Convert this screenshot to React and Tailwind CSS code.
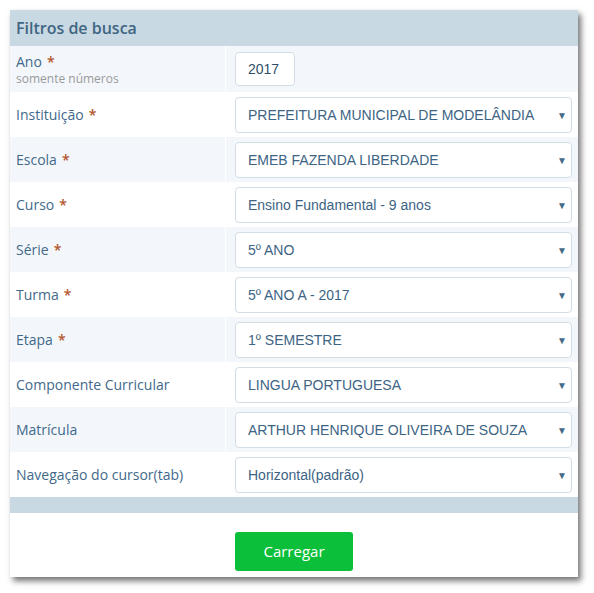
const fields = [
  { label: 'Instituição', required: true, value: 'PREFEITURA MUNICIPAL DE MODELÂNDIA' },
  { label: 'Escola', required: true, value: 'EMEB FAZENDA LIBERDADE' },
  { label: 'Curso', required: true, value: 'Ensino Fundamental - 9 anos' },
  { label: 'Série', required: true, value: '5º ANO' },
  { label: 'Turma', required: true, value: '5º ANO A - 2017' },
  { label: 'Etapa', required: true, value: '1º SEMESTRE' },
  { label: 'Componente Curricular', required: false, value: 'LINGUA PORTUGUESA' },
  { label: 'Matrícula', required: false, value: 'ARTHUR HENRIQUE OLIVEIRA DE SOUZA' },
  { label: 'Navegação do cursor(tab)', required: false, value: 'Horizontal(padrão)' },
];

function Asterisk() {
  return <span className="ml-[5px] text-[#b4552d] font-semibold">*</span>;
}

function FakeSelect({ value }) {
  return (
    <div className="flex h-[36px] w-full items-center justify-between rounded-[4px] border border-[#d3dde6] bg-white pt-px pl-[12px] pr-[4px] font-['Liberation_Sans',Arial,sans-serif] text-[14px] text-[#3d6484]">
      <span>{value}</span>
      <span className="text-[10px] text-[#44698a]">▼</span>
    </div>
  );
}

export default function App() {
  return (
    <div className="min-h-[593px] bg-white pt-[10px] pl-[10px] font-['Open_Sans',sans-serif]">
      <div className="w-[568px] bg-white shadow-[3px_4px_6px_rgba(0,0,0,0.55)]">
        <div className="flex h-[36px] items-center bg-[#c9d9e3] pl-[6px] text-[16px] font-semibold text-[#3f6582]">
          Filtros de busca
        </div>

        <div className="grid h-[46px] grid-cols-[216px_1fr] bg-[#f3f7fb]">
          <div className="flex flex-col justify-center border-r border-white pt-[2px] pl-[6px] text-[14px] leading-[18px] text-[#42698a]">
            <div>
              Ano<Asterisk />
            </div>
            <div className="text-[12px] leading-[16px] text-[#9a9a9a]">somente números</div>
          </div>
          <div className="flex items-center pl-[9px]">
            <div className="flex h-[34px] w-[60px] items-center rounded-[4px] border border-[#d3dde6] bg-white pt-px pl-[12px] font-['Liberation_Sans',Arial,sans-serif] text-[14px] text-[#2f4f6b]">
              2017
            </div>
          </div>
        </div>

        {fields.map((field, i) => (
          <div
            key={field.label}
            className={`grid h-[45px] grid-cols-[216px_1fr] ${i % 2 === 1 ? 'bg-[#f3f7fb]' : 'bg-white'}`}
          >
            <div className="flex items-center border-r border-white pl-[6px] text-[14px] text-[#42698a]">
              {field.label}
              {field.required && <Asterisk />}
            </div>
            <div className="flex items-center pl-[9px] pr-[6px]">
              <FakeSelect value={field.value} />
            </div>
          </div>
        ))}

        <div className="h-[16px] bg-[#c9d9e3]" />

        <div className="flex justify-center pt-[19px] pb-[6px]">
          <button className="h-[39px] w-[118px] rounded-[3px] bg-[#0bbf3a] text-[15px] text-white">
            Carregar
          </button>
        </div>
      </div>
    </div>
  );
}
